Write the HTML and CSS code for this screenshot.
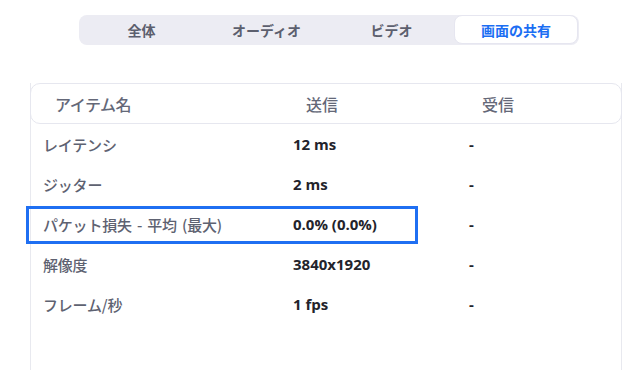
FILE: index.html
```html
<!DOCTYPE html>
<html lang="ja">
<head>
<meta charset="utf-8">
<link rel="stylesheet" href="styles.css">
</head>
<body>
<div class="page">
  <div class="tabs">
    <div class="tab">全体</div>
    <div class="tab">オーディオ</div>
    <div class="tab">ビデオ</div>
    <div class="tab active">画面の共有</div>
  </div>
  <div class="card">
    <div class="thead">
      <div class="c1">アイテム名</div>
      <div class="c2">送信</div>
      <div class="c3">受信</div>
    </div>
    <div class="row">
      <div class="c1 label">レイテンシ</div>
      <div class="c2 val">12 ms</div>
      <div class="c3 val">-</div>
    </div>
    <div class="row">
      <div class="c1 label">ジッター</div>
      <div class="c2 val">2 ms</div>
      <div class="c3 val">-</div>
    </div>
    <div class="row highlighted">
      <div class="c1 label">パケット損失 - 平均 (最大)</div>
      <div class="c2 val">0.0% (0.0%)</div>
      <div class="c3 val">-</div>
    </div>
    <div class="row">
      <div class="c1 label">解像度</div>
      <div class="c2 val">3840x1920</div>
      <div class="c3 val">-</div>
    </div>
    <div class="row">
      <div class="c1 label">フレーム/秒</div>
      <div class="c2 val">1 fps</div>
      <div class="c3 val">-</div>
    </div>
  </div>
</div>
</body>
</html>
```
FILE: styles.css
```css
html, body {
  margin: 0;
  padding: 0;
  background: #ffffff;
  font-family: "Noto Sans CJK JP", "Noto Sans", sans-serif;
}
.page {
  width: 642px;
  height: 370px;
  overflow: hidden;
  padding-top: 15px;
  box-sizing: border-box;
}
.tabs {
  margin-left: 79px;
  width: 500px;
  height: 30px;
  background: #ececf3;
  border-radius: 8px;
  display: grid;
  grid-template-columns: repeat(4, 1fr);
  box-sizing: border-box;
}
.tab {
  display: flex;
  align-items: center;
  justify-content: center;
  font-size: 14px;
  font-weight: 700;
  color: #5c5f6e;
  border-radius: 8px;
}
.tab.active {
  background: #ffffff;
  color: #1b6ef3;
  border: 1px solid #e6e6f0;
  margin: 0 1px 1px 0;
}
.card {
  margin-top: 38px;
  margin-left: 30px;
  width: 592px;
  height: 300px;
  border-left: 1px solid #e8e9ef;
  border-right: 1px solid #e8e9ef;
  box-sizing: border-box;
}
.thead {
  margin: 0 -1px;
  height: 41px;
  border: 1px solid #e6e7ef;
  border-radius: 10px;
  box-sizing: border-box;
  display: grid;
  grid-template-columns: 262px 176px 1fr;
  align-items: center;
  font-size: 16px;
  font-weight: 500;
  color: #646878;
}
.thead .c1 { padding-left: 24px; letter-spacing: -0.5px; }
.thead .c2 { padding-left: 13px; }
.thead .c3 { padding-left: 13px; }
.row {
  position: relative;
  height: 40px;
  display: grid;
  grid-template-columns: 262px 176px 1fr;
  align-items: center;
}
.row .c1 { padding-left: 12px; }
.label {
  font-size: 15px;
  font-weight: 500;
  color: #5e6271;
  white-space: nowrap;
  word-spacing: 2px;
  letter-spacing: -0.2px;
}
.val {
  font-family: "Open Sans", "Noto Sans", sans-serif;
  font-size: 15px;
  font-weight: 700;
  color: #23232b;
}
.highlighted::after {
  content: "";
  position: absolute;
  left: -5px;
  top: 2px;
  width: 392px;
  height: 38px;
  border: 3px solid #1f6ff2;
  box-sizing: border-box;
  pointer-events: none;
}
```
